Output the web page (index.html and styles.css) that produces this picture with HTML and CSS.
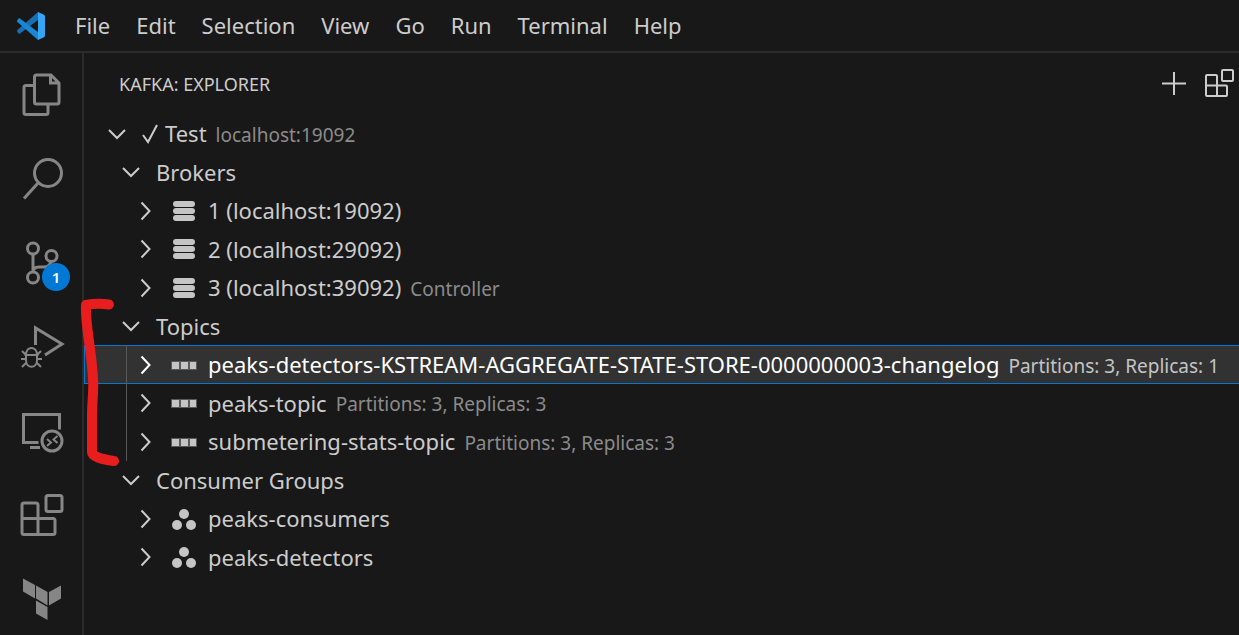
FILE: index.html
```
<!DOCTYPE html>
<html lang="en">
<head>
<meta charset="utf-8">
<title>Kafka Explorer</title>
<link rel="stylesheet" href="styles.css">
</head>
<body>
<svg class="defs" aria-hidden="true">
  <symbol id="down" viewBox="0 0 28 28"><path d="M6 10l8 8 8-8"/></symbol>
  <symbol id="right" viewBox="0 0 28 28"><path d="M10.500 5.500l8 8.500-8 8.500"/></symbol>
  <symbol id="broker" viewBox="0 0 28 28"><rect x="3" y="4" width="22" height="6" rx="3"/><rect x="3" y="11" width="22" height="6" rx="3"/><rect x="3" y="18" width="22" height="6" rx="3"/></symbol>
  <symbol id="topic" viewBox="0 0 28 28"><path class="topic-edge" d="M1 10h26v9H1z"/><path d="M2 11h7v7H2zM11 11h7v7h-7zM20 11h6v7h-6z"/></symbol>
  <symbol id="group" viewBox="0 0 28 28"><circle cx="14" cy="9" r="5"/><circle cx="7" cy="20" r="5"/><circle cx="21" cy="20" r="5"/></symbol>
</svg>
<header class="titlebar">
  <svg class="logo" viewBox="0 0 28 28" aria-hidden="true">
    <path fill="#1b6fb0" d="M1 17.500L21 0v8L3 21.500a1.500 1.500 0 0 1-1.500 0L.5 20a1.500 1.500 0 0 1 .5-2.500z"/>
    <path fill="#1787d6" d="M1 10.500L21 28v-8L3 6.500a1.500 1.500 0 0 0-1.500 0L.5 8a1.500 1.500 0 0 0 .5 2.500z"/>
    <path fill="#36a5f4" d="M21 0l6 2.700a2 2 0 0 1 1 1.800v19a2 2 0 0 1-1 1.800L21 28z"/>
  </svg>
  <nav class="menu">
    <button>File</button><button>Edit</button><button>Selection</button><button>View</button><button>Go</button><button>Run</button><button>Terminal</button><button>Help</button>
  </nav>
</header>
<div class="workbench">
  <nav class="activity">
    <button aria-label="Explorer"><svg viewBox="20 74 42 42"><path d="M36.500 75H51l8 8v19a2 2 0 0 1-2 2H36.500a2 2 0 0 1-2-2V77a2 2 0 0 1 2-2zM50.500 75v8H59M34 85.500h-8a2 2 0 0 0-2 2v25a2 2 0 0 0 2 2h20a2 2 0 0 0 2-2V105"/></svg></button>
    <button aria-label="Search"><svg viewBox="20 158 42 42"><circle cx="48" cy="173" r="13.500"/><path d="M38.500 182.500L24 198.500"/></svg></button>
    <button aria-label="Source Control"><svg viewBox="20 242 42 42"><circle cx="33" cy="248.500" r="5.500"/><circle cx="51.500" cy="256" r="5.500"/><circle cx="33" cy="277.500" r="5.500"/><path d="M33 254v18c0-4 3-5 6-5h5c4 0 6-2 7-5"/></svg><span class="badge">1</span></button>
    <button aria-label="Run and Debug"><svg viewBox="20 326 42 42"><path d="M35.500 345v-17L62 344l-17 11"/><path class="thin" d="M24.500 355h14M26 355c0-9.500 11-9.500 11 0v5c0 9-11 9-11 0zM21 359h5M37 359h5M22 351l4 4M41 351l-4 4M22 367l4-4M41 367l-4-4"/></svg></button>
    <button aria-label="Remote Explorer"><svg viewBox="20 410 42 42"><path d="M38.500 442.500h-15v-28h36v15M30 447.500h10"/><circle cx="52" cy="441" r="10"/><path class="thin" d="M47 439l4 3.500-4 3.500M57.500 436l-4 3.500 4 3.500"/></svg></button>
    <button aria-label="Extensions"><svg viewBox="20 494 42 42"><path d="M24 503h12a2 2 0 0 1 2 2v13.500h15a2 2 0 0 1 2 2v12a2 2 0 0 1-2 2H24a2 2 0 0 1-2-2V505a2 2 0 0 1 2-2zM22 518.500h16v16"/><rect x="46" y="495.500" width="16" height="16" rx="2"/></svg></button>
    <button aria-label="Terraform"><svg class="solid" viewBox="20 578 42 42"><path d="M23 578.500l12 6.500v13.500l-12-7zM36 585.500l11.500 6.500v13.500L36 598.500zM49 592l12-6.500v13L49 605.500zM36 600.500l11.500 6.500v13L36 613.500z"/></svg></button>
  </nav>
  <main class="sidebar">
    <div class="heading">
      <h1>KAFKA: EXPLORER</h1>
      <button aria-label="Add cluster"><svg viewBox="0 0 28 28"><path d="M14 2v23M2 13.500h24"/></svg></button>
      <button aria-label="Extensions"><svg viewBox="0 0 28 28"><path d="M2 5h9a1 1 0 0 1 1 1v9.500h9a1 1 0 0 1 1 1V25a1 1 0 0 1-1 1H2a1 1 0 0 1-1-1V6a1 1 0 0 1 1-1zM1 15.500h11V26"/><rect x="17" y="0" width="11" height="11" rx="1"/></svg></button>
    </div>
    <ul class="tree" role="tree">
      <li class="row l1" role="treeitem"><svg class="chev"><use href="#down"/></svg><svg class="check" viewBox="0 0 16 20" aria-hidden="true"><path d="M1 11l5 7L15 1"/></svg><span>Test</span><small>localhost:19092</small></li>
      <li class="row l2" role="treeitem"><svg class="chev"><use href="#down"/></svg><span>Brokers</span></li>
      <li class="row l3" role="treeitem"><svg class="chev"><use href="#right"/></svg><svg class="kind"><use href="#broker"/></svg><span>1 (localhost:19092)</span></li>
      <li class="row l3" role="treeitem"><svg class="chev"><use href="#right"/></svg><svg class="kind"><use href="#broker"/></svg><span>2 (localhost:29092)</span></li>
      <li class="row l3" role="treeitem"><svg class="chev"><use href="#right"/></svg><svg class="kind"><use href="#broker"/></svg><span>3 (localhost:39092)</span><small>Controller</small></li>
      <li class="row l2" role="treeitem"><svg class="chev"><use href="#down"/></svg><span>Topics</span></li>
      <li class="row l3 guide selected" role="treeitem" aria-selected="true"><svg class="chev"><use href="#right"/></svg><svg class="kind"><use href="#topic"/></svg><span>peaks-detectors-KSTREAM-AGGREGATE-STATE-STORE-0000000003-changelog</span><small>Partitions: 3, Replicas: 1</small></li>
      <li class="row l3 guide" role="treeitem"><svg class="chev"><use href="#right"/></svg><svg class="kind"><use href="#topic"/></svg><span>peaks-topic</span><small>Partitions: 3, Replicas: 3</small></li>
      <li class="row l3 guide" role="treeitem"><svg class="chev"><use href="#right"/></svg><svg class="kind"><use href="#topic"/></svg><span>submetering-stats-topic</span><small>Partitions: 3, Replicas: 3</small></li>
      <li class="row l2" role="treeitem"><svg class="chev"><use href="#down"/></svg><span>Consumer Groups</span></li>
      <li class="row l3" role="treeitem"><svg class="chev"><use href="#right"/></svg><svg class="kind"><use href="#group"/></svg><span>peaks-consumers</span></li>
      <li class="row l3" role="treeitem"><svg class="chev"><use href="#right"/></svg><svg class="kind"><use href="#group"/></svg><span>peaks-detectors</span></li>
    </ul>
    <svg class="mark" viewBox="80 298 40 170" aria-hidden="true"><path d="M109 304.500Q97 303 86 305C85 323 91 347 93 378C94 393 92 400 92 415V452Q92 458 114 461"/></svg>
  </main>
</div>
</body>
</html>
```
FILE: styles.css
```
* { box-sizing: border-box; }
body {
  margin: 0;
  min-height: 100vh;
  display: flex;
  flex-direction: column;
  overflow: hidden;
  background: #181818;
  color: #cccccc;
  font: 22px/28px "Noto Sans", "Open Sans", sans-serif;
}
button {
  padding: 0;
  border: 0;
  background: none;
  color: inherit;
  font: inherit;
}
svg { flex: none; fill: none; stroke: currentColor; stroke-width: 2; overflow: visible; }
.defs { position: absolute; width: 0; height: 0; }

.titlebar {
  display: flex;
  align-items: center;
  height: 53px;
  padding-left: 17px;
  border-bottom: 2px solid #2b2b2b;
}
.logo { width: 28px; height: 28px; stroke: none; }
.menu { display: flex; gap: 26px; margin-left: 30px; padding-bottom: 2px; }

.workbench { flex: 1; display: flex; }
.activity {
  flex: none;
  width: 84px;
  border-right: 2px solid #2b2b2b;
  color: #868686;
}
.activity button {
  position: relative;
  display: flex;
  align-items: center;
  justify-content: center;
  width: 100%;
  height: 84px;
}
.activity svg { width: 42px; height: 42px; stroke-width: 3; }
.activity .thin { stroke-width: 2; }
.activity .solid { fill: currentColor; stroke: none; }
.badge {
  position: absolute;
  right: 12px;
  bottom: 14px;
  width: 28px;
  height: 28px;
  border-radius: 50%;
  background: #0078d4;
  color: #ffffff;
  font-size: 15px;
  font-weight: 600;
  line-height: 28px;
  text-align: center;
}

.sidebar { position: relative; flex: 1; min-width: 0; }
.heading {
  display: flex;
  align-items: center;
  gap: 17px;
  height: 61px;
  padding: 0 6px 0 35px;
}
.heading h1 { flex: 1; margin: 0; font-size: 18px; font-weight: 400; }
.heading svg { display: block; width: 28px; height: 28px; }

.tree { margin: 0; padding: 0; list-style: none; }
.row {
  position: relative;
  display: flex;
  align-items: center;
  height: 39px;
  white-space: nowrap;
}
.row:nth-child(even) { height: 38px; }
.l1 { padding-left: 19px; }
.l2 { padding-left: 33px; }
.l3 { padding-left: 47px; }
.chev { width: 28px; height: 28px; margin-right: 11px; }
.check { width: 16px; height: 20px; margin-right: 7px; }
.kind { width: 28px; height: 28px; margin-right: 10px; fill: #c5c5c5; stroke: none; }
.topic-edge { fill: #5a5a5a; }
.row span { padding-bottom: 1px; }
.row small { margin-left: 9px; padding-top: 2px; color: #8b8b8b; font-size: 19px; }
.guide::before {
  content: "";
  position: absolute;
  top: 0;
  bottom: 0;
  left: 42px;
  width: 1px;
  background: #585858;
}
.selected {
  background: #323232;
  color: #ffffff;
  box-shadow: inset 1px 0 #0078d4, inset 0 1px #0078d4, inset 0 -1px #0078d4;
}
.row.selected small { color: #c4c4c4; }

.mark {
  position: absolute;
  top: 245px;
  left: -4px;
  width: 40px;
  height: 170px;
  color: #e81d1d;
  stroke-width: 10;
  stroke-linecap: round;
  stroke-linejoin: round;
}
```
